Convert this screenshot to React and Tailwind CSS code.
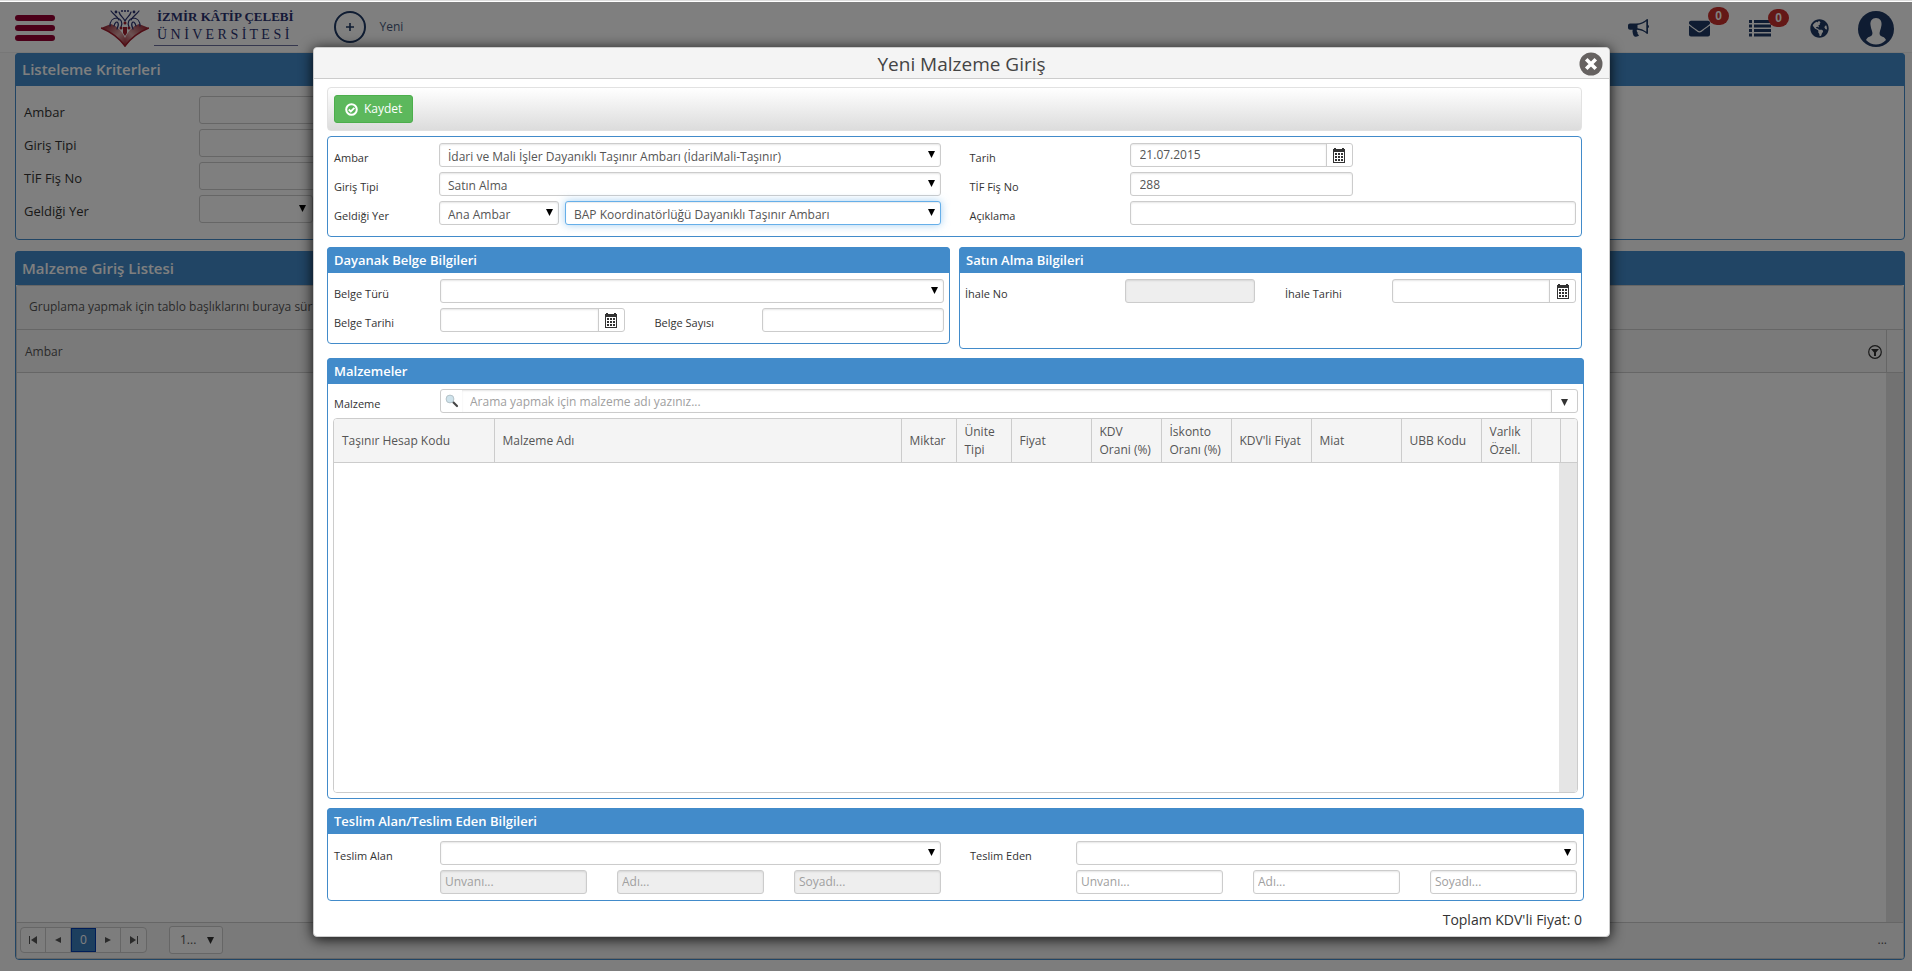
import React, { useState } from 'react';
import { FaEnvelope, FaGlobeAmericas } from 'react-icons/fa';

const materialColumns = [
  { label: 'Taşınır Hesap Kodu', width: 'w-[160px]' },
  { label: 'Malzeme Adı', width: '' },
  { label: 'Miktar', width: 'w-[55px]' },
  { label: 'Ünite\nTipi', width: 'w-[55px]' },
  { label: 'Fiyat', width: 'w-[80px]' },
  { label: 'KDV\nOrani (%)', width: 'w-[70px]' },
  { label: 'İskonto\nOranı (%)', width: 'w-[70px]' },
  { label: "KDV'li Fiyat", width: 'w-[80px]' },
  { label: 'Miat', width: 'w-[90px]' },
  { label: 'UBB Kodu', width: 'w-[80px]' },
  { label: 'Varlık\nÖzell.', width: 'w-[50px]' },
  { label: '', width: 'w-[29px]' },
  { label: '', width: 'w-[17px]' }
];

const fieldBase =
  'block w-full rounded-[3px] border bg-white text-[12px] text-[#555] outline-none placeholder:text-[#a0a0a0] disabled:bg-[#eee]';
const fieldIdle = 'border-[#ccc] shadow-[inset_0_1px_2px_rgba(0,0,0,0.1)]';
const fieldFocused =
  'border-[#66afe9] shadow-[inset_0_1px_1px_rgba(0,0,0,0.08),0_0_8px_rgba(102,175,233,0.6)]';

const CaretIcon = ({ className }) => (
  <svg viewBox="0 0 7 7" className={`h-[7px] w-[7px] ${className || ''}`} aria-hidden="true">
    <path d="M0 0h7L3.5 7z" fill="currentColor" />
  </svg>
);

const CalendarIcon = () => (
  <svg viewBox="0 0 12 15" className="h-[15px] w-[12px]" shapeRendering="crispEdges" aria-hidden="true">
    <path
      fill="#333"
      d="M0 1h1V0h2v1h6V0h2v1h1v14H0zM1 4v10h10V4zM2 5h2v2H2zM5 5h2v2H5zM8 5h2v2H8zM2 8h2v2H2zM5 8h2v2H5zM8 8h2v2H8zM2 11h2v2H2zM5 11h2v2H5zM8 11h2v2H8z"
      fillRule="evenodd"
    />
  </svg>
);

const Label = ({ htmlFor, children, className }) => (
  <label htmlFor={htmlFor} className={`shrink-0 pt-[6px] text-[11px] leading-[18px] text-[#333] ${className}`}>
    {children}
  </label>
);

const TextBox = ({ className, ...props }) => (
  <input type="text" className={`${fieldBase} ${fieldIdle} h-6 ${className || 'px-[9px]'}`} {...props} />
);

const SelectBox = ({ id, value, label, focused, className }) => (
  <div className={`relative ${className || 'w-full'}`}>
    <select
      id={id}
      aria-label={label}
      className={`${fieldBase} h-6 appearance-none pt-[3px] pr-5 pl-2 ${focused ? fieldFocused : fieldIdle}`}
    >
      <option>{value}</option>
    </select>
    <CaretIcon className="pointer-events-none absolute top-2 right-[6px] text-black" />
  </div>
);

const DateBox = ({ id, defaultValue, className }) => (
  <div className={`flex h-6 overflow-hidden rounded-[3px] border border-[#ccc] bg-white ${className}`}>
    <input
      id={id}
      type="text"
      defaultValue={defaultValue}
      className="min-w-0 flex-1 px-[9px] text-[12px] text-[#555] shadow-[inset_0_1px_2px_rgba(0,0,0,0.1)] outline-none"
    />
    <button type="button" aria-label="Takvim" className="flex w-[26px] items-center justify-center border-l border-[#ccc]">
      <CalendarIcon />
    </button>
  </div>
);

const Panel = ({ title, children, className }) => (
  <section className={`rounded-[4px] border border-[#428bca] bg-white ${className || ''}`}>
    <h3 className="-mx-px -mt-px rounded-t-[4px] bg-[#428bca] px-[7px] text-[13px] leading-[26px] font-semibold text-white">
      {title}
    </h3>
    {children}
  </section>
);

const Logo = () => (
  <a href="#" className="flex items-start gap-[5px] text-[#2a3270]">
    <svg viewBox="0 0 48 38" className="h-[38px] w-[48px]" aria-hidden="true">
      <defs>
        <linearGradient id="page" x1="0" y1="0" x2="1" y2="1">
          <stop offset="0" stopColor="#8c1020" />
          <stop offset="0.6" stopColor="#d9a4a4" />
          <stop offset="1" stopColor="#a02030" />
        </linearGradient>
        <linearGradient id="pageRight" x1="1" y1="0" x2="0" y2="1">
          <stop offset="0" stopColor="#8c1020" />
          <stop offset="0.6" stopColor="#d9a4a4" />
          <stop offset="1" stopColor="#a02030" />
        </linearGradient>
      </defs>
      <path d="M0 19l10-4c6 2 11 7 14 14v9C18 29 10 23 0 19z" fill="url(#page)" />
      <path d="M48 19l-10-4c-6 2-11 7-14 14v9c6-9 14-15 24-19z" fill="url(#pageRight)" />
      <path d="M0 19c10 4 18 10 24 18 6-8 14-14 24-18" fill="none" stroke="#a01c2c" strokeWidth="1.4" />
      <g fill="none" stroke="#2a3270" strokeWidth="1.2" strokeLinecap="round">
        <path d="M10 2c3 4 6 5 8 9M38 2c-3 4-6 5-8 9M18 3c1 4 4 5 6 9 2-4 5-5 6-9" />
        <path d="M9 17c0-5 3-8 7-8 4 1 6 4 4 9M39 17c0-5-3-8-7-8-4 1-6 4-4 9" />
        <path d="M13 17c1-4 3-5 4-3s0 4-1 6M35 17c-1-4-3-5-4-3s0 4 1 6" />
      </g>
      <g fill="#2a3270">
        <circle cx="15" cy="3" r="1.400" />
        <circle cx="33" cy="3" r="1.400" />
        <circle cx="21" cy="2" r="1" />
        <circle cx="24" cy="2" r="1" />
        <circle cx="27" cy="2" r="1" />
      </g>
      <g fill="#a01c2c">
        <circle cx="24" cy="14" r="1.500" />
        <circle cx="20" cy="19" r="1.500" />
        <circle cx="28" cy="19" r="1.500" />
        <path d="M22 18h4v6l-2 3-2-3z" />
      </g>
    </svg>
    <span className="border-b border-[#6b6f9c] pr-1 pl-[3px] font-['Liberation_Serif',serif]">
      <span className="block text-[13px] leading-4 font-bold whitespace-nowrap">İZMİR KÂTİP ÇELEBİ</span>
      <span className="block text-[14px] leading-5 whitespace-nowrap">Ü N İ V E R S İ T E S İ</span>
    </span>
  </a>
);

const BullhornIcon = () => (
  <svg viewBox="0 0 21 18" className="h-[18px] w-[21px]" aria-hidden="true">
    <path
      d="M19 0c.6 0 1 .4 1 1v5c1.300 .3 1.300 3 0 3v5c0 .6-.5 1-1 1-2.500-2.500-6-4-10-4.300-.7 1.300 0 2 .7 2.800-.5 1.200.3 2 1.300 2.800-1.100 1.900-4.500 1.900-5.500.2-.6-1.900-1.500-3.700-.7-5.800H2c-1.100 0-2-.9-2-2V6.500C0 5.400.9 4.500 2 4.500h6C12.500 4.500 16.500 2.500 19 0zm-.7 2.300C15.500 4.600 12.500 5.700 9.500 6v3.200c3 .3 6 1.400 8.800 3.600z"
      fill="currentColor"
      fillRule="evenodd"
    />
  </svg>
);

const ListIcon = () => (
  <svg viewBox="0 0 22 17" className="h-[17px] w-[22px]" aria-hidden="true">
    <path
      d="M0 0h3v3H0zM5 0h17v3H5zM0 4.500h3v3H0zM5 4.500h17v3H5zM0 9h3v3H0zM5 9h17v3H5zM0 13.500h3v3H0zM5 13.500h17v3H5z"
      fill="currentColor"
    />
  </svg>
);

const Badge = ({ children }) => (
  <span className="absolute -top-[11px] left-[19px] flex h-[18px] w-[21px] items-center justify-center rounded-full bg-[#c9302c] font-['Liberation_Sans',sans-serif] text-[12px] font-bold text-white">
    {children}
  </span>
);

const TopBar = () => (
  <header className="flex h-[52px] items-start justify-between border-b border-[#eee] bg-white pt-2 pr-[18px] pl-[15px] text-[#1e3864]">
    <div className="flex items-start">
      <button type="button" aria-label="Menü" className="mt-[6px] mr-[46px] flex w-10 flex-col gap-1">
        <span className="h-[6px] rounded-[3px] bg-[#960032]" />
        <span className="h-[6px] rounded-[3px] bg-[#960032]" />
        <span className="h-[6px] rounded-[3px] bg-[#960032]" />
      </button>
      <Logo />
      <button type="button" className="mt-[2px] ml-9 flex items-center gap-[14px] text-[12px] text-[#46587c]">
        <span className="flex h-8 w-8 items-center justify-center rounded-full border-2 border-[#1e3864]">
          <svg viewBox="0 0 8 8" className="h-2 w-2" aria-hidden="true">
            <path d="M4 0v8M0 4h8" stroke="#1e3864" strokeWidth="1.6" />
          </svg>
        </span>
        Yeni
      </button>
    </div>
    <div className="flex items-center">
      <button type="button" aria-label="Duyurular" className="mr-[40px]">
        <BullhornIcon />
      </button>
      <button type="button" aria-label="Mesajlar" className="relative mr-[39px]">
        <FaEnvelope size={21} />
        <Badge>0</Badge>
      </button>
      <button type="button" aria-label="Görevler" className="relative mr-[39px]">
        <ListIcon />
        <Badge>0</Badge>
      </button>
      <button type="button" aria-label="Dil" className="mr-[29px]">
        <FaGlobeAmericas size={19} />
      </button>
      <button type="button" aria-label="Profil" className="pt-[2px]">
        <svg viewBox="0 0 36 36" className="h-9 w-9" aria-hidden="true">
          <circle cx="18" cy="18" r="18" fill="#1e3864" />
          <path
            d="M18 7c-4 0-6 3-5.500 7 .2 2 .8 4 1.500 6 .8 2.500.5 4-1 5-2 1-4 1.300-5 4 3 3 6.500 4.500 10 4.500s7-1.500 10-4.500c-1-2.700-3-3-5-4-1.500-1-1.800-2.500-1-5 .7-2 1.300-4 1.500-6 .5-4-1.500-7-5.500-7z"
            fill="#fff"
          />
        </svg>
      </button>
    </div>
  </header>
);

const criteria = [
  { id: 'f-ambar', label: 'Ambar' },
  { id: 'f-giris', label: 'Giriş Tipi' },
  { id: 'f-tif', label: 'TİF Fiş No' }
];

const pageButton = 'flex h-6 w-[25px] items-center justify-center border-r border-[#ccc]';

const ListPage = () => (
  <div className="flex min-h-[calc(100vh-1px)] flex-col bg-[#fafafa] pb-[11px]">
    <TopBar />
    <main className="mr-[7px] ml-[15px] flex flex-1 flex-col gap-[11px]">
      <section className="rounded-[4px] border border-[#428bca] bg-white">
        <h2 className="-mx-px -mt-px rounded-t-[4px] bg-[#428bca] px-[7px] text-[15px] leading-[33px] font-semibold text-white">
          Listeleme Kriterleri
        </h2>
        <div className="flex flex-col gap-[5px] px-2 pt-[10px] pb-4 text-[13px] text-[#333]">
          {criteria.map((item) => (
            <div key={item.id} className="flex items-center">
              <label htmlFor={item.id} className="w-[175px] pt-[6px]">
                {item.label}
              </label>
              <input id={item.id} type="text" className="h-7 w-[300px] rounded-[3px] border border-[#ccc]" />
            </div>
          ))}
          <div className="flex items-center">
            <label htmlFor="f-yer" className="w-[175px] pt-[6px]">
              Geldiği Yer
            </label>
            <div className="relative w-[114px]">
              <select id="f-yer" className="block h-7 w-full appearance-none rounded-[3px] border border-[#ccc]">
                <option></option>
              </select>
              <CaretIcon className="pointer-events-none absolute top-[10px] right-[7px] text-black" />
            </div>
          </div>
        </div>
      </section>

      <section className="flex flex-1 flex-col rounded-[4px] border border-[#428bca] bg-white">
        <h2 className="-mx-px -mt-px rounded-t-[4px] bg-[#428bca] px-[7px] text-[15px] leading-[34px] font-semibold text-white">
          Malzeme Giriş Listesi
        </h2>
        <div className="flex flex-1 flex-col rounded-[3px] border border-[#ccc]">
          <p className="bg-[#f5f5f5] px-3 pb-[2px] text-[12px] leading-[41px] text-[#555]">
            Gruplama yapmak için tablo başlıklarını buraya sür
          </p>
          <table className="w-full table-fixed border-y border-[#ccc] bg-[#f5f5f5]">
            <thead>
              <tr className="h-[43px] text-left text-[12px] text-[#555]">
                <th className="w-[400px] px-2 pt-px font-normal">Ambar</th>
                <th className="px-1 pt-[2px] font-normal">
                  <button type="button" aria-label="Filtre" className="ml-auto block">
                    <svg viewBox="0 0 14 14" className="h-[14px] w-[14px]" aria-hidden="true">
                      <circle cx="7" cy="7" r="6.300" fill="none" stroke="#333" strokeWidth="1.200" />
                      <path d="M3 4h8L8 7.500V11H6V7.500z" fill="#333" />
                    </svg>
                  </button>
                </th>
                <th className="w-[17px] border-l border-[#ccc]" />
              </tr>
            </thead>
          </table>
          <div className="flex flex-1 justify-end">
            <div className="w-[17px] bg-[#e5e5e5]" />
          </div>
          <footer className="flex h-9 items-center justify-between border-t border-[#ccc] bg-[#f5f5f5] pr-4 pb-[2px] pl-[3px] text-[12px] text-[#555]">
            <div className="flex items-center gap-[22px]">
              <nav aria-label="Sayfalar" className="flex overflow-hidden rounded-[4px] border border-[#ccc] bg-[#fafafa]">
                <button type="button" aria-label="İlk" className={pageButton}>
                  <svg viewBox="0 0 8 8" className="h-2 w-2"><path d="M0 0h1v8H0zM8 0v8L2 4z" fill="#555" /></svg>
                </button>
                <button type="button" aria-label="Önceki" className={pageButton}>
                  <svg viewBox="0 0 8 8" className="h-2 w-2"><path d="M7 1v6L1 4z" fill="#555" /></svg>
                </button>
                <button type="button" className="h-6 w-[25px] border border-[#003bb0] bg-[#3a7fbd] text-white">
                  0
                </button>
                <button type="button" aria-label="Sonraki" className={pageButton}>
                  <svg viewBox="0 0 8 8" className="h-2 w-2"><path d="M1 1v6l6-3z" fill="#555" /></svg>
                </button>
                <button type="button" aria-label="Son" className="flex h-6 w-[25px] items-center justify-center">
                  <svg viewBox="0 0 8 8" className="h-2 w-2"><path d="M7 0h1v8H7zM0 0v8l6-4z" fill="#555" /></svg>
                </button>
              </nav>
              <div className="relative w-[54px]">
                <select
                  aria-label="Sayfa boyutu"
                  className="block h-7 w-full appearance-none rounded-[3px] border border-[#ccc] bg-white pl-[10px]"
                >
                  <option>1...</option>
                </select>
                <CaretIcon className="pointer-events-none absolute top-[11px] right-[9px] text-[#333]" />
              </div>
            </div>
            <span>...</span>
          </footer>
        </div>
      </section>
    </main>
  </div>
);

const personPlaceholders = ['Unvanı...', 'Adı...', 'Soyadı...'];

const PersonFields = ({ id, label, disabled }) => (
  <div className="flex items-start">
    <Label htmlFor={id} className="w-[106px]">
      {label}
    </Label>
    <div className="flex flex-1 flex-col gap-[5px]">
      <SelectBox id={id} value="" />
      <div className="grid grid-cols-3 gap-x-[30px]">
        {personPlaceholders.map((text) => (
          <TextBox key={text} aria-label={text} placeholder={text} disabled={disabled} className="px-1" />
        ))}
      </div>
    </div>
  </div>
);

const NewEntryDialog = ({ onClose }) => (
  <div className="absolute inset-x-0 top-px min-h-[calc(100%-1px)] bg-black/50 pt-[45px] pl-[11px]">
    <div
      role="dialog"
      aria-labelledby="dialog-title"
      className="mx-auto w-full max-w-[1297px] rounded-[4px] border border-[#ccc] bg-white shadow-[0_2px_14px_rgba(0,0,0,0.9)]"
    >
      <div className="relative rounded-t-[4px] border-b border-[#ccc] bg-[#f4f4f4]">
        <h2 id="dialog-title" className="pt-[2px] text-center text-[19px] leading-7 text-[#444]">
          Yeni Malzeme Giriş
        </h2>
        <button type="button" aria-label="Kapat" onClick={onClose} className="absolute top-1 right-[6px]">
          <svg viewBox="0 0 24 24" className="h-6 w-6" aria-hidden="true">
            <circle cx="12" cy="12" r="11.500" fill="#666261" />
            <path d="M8.500 8.500l7 7M15.500 8.500l-7 7" stroke="#fff" strokeWidth="3.600" strokeLinecap="square" />
          </svg>
        </button>
      </div>

      <form className="flex flex-col gap-[9px] pt-2 pr-[25px] pl-[13px]">
        <div className="mr-[2px] flex flex-col gap-[5px]">
          <div className="flex h-11 items-center rounded-[4px] border border-[#e2e2e2] bg-linear-to-b from-white to-[#dcdcdc] px-[6px]">
            <button
              type="button"
              className="flex h-7 items-center gap-[6px] rounded-[3px] border border-[#4cae4c] bg-[#5cb85c] px-[10px] text-[12px] text-white"
            >
              <svg viewBox="0 0 13 13" className="h-[13px] w-[13px]" aria-hidden="true">
                <circle cx="6.500" cy="6.500" r="5.300" fill="none" stroke="#fff" strokeWidth="2" />
                <path d="M3.800 6.500l2 2 3.600-3.700" fill="none" stroke="#fff" strokeWidth="1.800" />
              </svg>
              Kaydet
            </button>
          </div>

          <div className="grid grid-cols-2 gap-x-[29px] gap-y-[5px] rounded-[4px] border border-[#428bca] pt-[6px] pr-[5px] pb-[11px] pl-[6px]">
            <div className="flex">
              <Label htmlFor="ambar" className="w-[105px]">Ambar</Label>
              <SelectBox id="ambar" value="İdari ve Mali İşler Dayanıklı Taşınır Ambarı (İdariMali-Taşınır)" />
            </div>
            <div className="flex">
              <Label htmlFor="tarih" className="w-[160px]">Tarih</Label>
              <DateBox id="tarih" defaultValue="21.07.2015" className="w-1/2 max-w-[223px]" />
            </div>
            <div className="flex">
              <Label htmlFor="giris" className="w-[105px]">Giriş Tipi</Label>
              <SelectBox id="giris" value="Satın Alma" />
            </div>
            <div className="flex">
              <Label htmlFor="tif" className="w-[160px]">TİF Fiş No</Label>
              <div className="w-1/2 max-w-[223px]">
                <TextBox id="tif" defaultValue="288" />
              </div>
            </div>
            <div className="flex">
              <Label htmlFor="yer" className="w-[105px]">Geldiği Yer</Label>
              <SelectBox id="yer" value="Ana Ambar" className="mr-[6px] w-[120px] shrink-0" />
              <SelectBox label="Geldiği ambar" value="BAP Koordinatörlüğü Dayanıklı Taşınır Ambarı" focused />
            </div>
            <div className="flex">
              <Label htmlFor="aciklama" className="w-[160px]">Açıklama</Label>
              <TextBox id="aciklama" />
            </div>
          </div>

          <div className="mt-[5px] grid grid-cols-2 items-start gap-[9px]">
            <Panel title="Dayanak Belge Bilgileri">
              <div className="flex flex-col gap-[5px] pt-[6px] pr-[5px] pb-[11px] pl-[6px]">
                <div className="flex">
                  <Label htmlFor="belge-turu" className="w-[106px]">Belge Türü</Label>
                  <SelectBox id="belge-turu" value="" />
                </div>
                <div className="flex">
                  <Label htmlFor="belge-tarihi" className="w-[106px]">Belge Tarihi</Label>
                  <DateBox id="belge-tarihi" className="mr-[30px] min-w-0 flex-1" />
                  <Label htmlFor="belge-sayisi" className="w-[107px]">Belge Sayısı</Label>
                  <div className="min-w-0 flex-1">
                    <TextBox id="belge-sayisi" />
                  </div>
                </div>
              </div>
            </Panel>
            <Panel title="Satın Alma Bilgileri">
              <div className="flex h-[75px] items-start pt-[6px] pr-[5px] pl-[5px]">
                <Label htmlFor="ihale-no" className="w-[160px]">İhale No</Label>
                <div className="mr-[30px] w-[130px]">
                  <TextBox id="ihale-no" disabled />
                </div>
                <Label htmlFor="ihale-tarihi" className="w-[107px]">İhale Tarihi</Label>
                <DateBox id="ihale-tarihi" className="min-w-0 flex-1" />
              </div>
            </Panel>
          </div>
        </div>

        <Panel title="Malzemeler">
          <div className="flex flex-col gap-[5px] p-[5px]">
            <div className="flex pl-px">
              <Label htmlFor="malzeme" className="w-[106px]">Malzeme</Label>
              <div className="flex h-6 flex-1 overflow-hidden rounded-[3px] border border-[#ccc] bg-white">
                <span className="flex w-[21px] items-center justify-center">
                  <svg viewBox="0 0 14 14" className="h-[14px] w-[14px]" aria-hidden="true">
                    <path d="M8 8l4 4" stroke="#444" strokeWidth="2.200" strokeLinecap="round" />
                    <circle cx="5" cy="5" r="3.900" fill="#cfe3ec" stroke="#b4c2c8" />
                  </svg>
                </span>
                <input
                  id="malzeme"
                  type="text"
                  placeholder="Arama yapmak için malzeme adı yazınız..."
                  className="min-w-0 flex-1 px-2 pt-[2px] text-[12px] text-[#555] shadow-[inset_0_1px_2px_rgba(0,0,0,0.1)] outline-none placeholder:text-[#a0a0a0]"
                />
                <button
                  type="button"
                  aria-label="Listeyi aç"
                  className="flex w-[26px] items-center justify-center border-l border-[#ccc] pt-[3px] text-[#333]"
                >
                  <CaretIcon />
                </button>
              </div>
            </div>

            <div className="overflow-hidden rounded-[4px] border border-[#ccc]">
              <table className="w-full table-fixed border-collapse bg-[#f4f4f4]">
                <thead>
                  <tr className="h-[43px] border-b border-[#ccc] text-left text-[12px] leading-[18px] text-[#555]">
                    {materialColumns.map((col, i) => (
                      <th
                        key={i}
                        className={`border-r border-[#ccc] pt-[2px] pl-2 font-normal whitespace-pre last:border-r-0 ${col.width}`}
                      >
                        {col.label}
                      </th>
                    ))}
                  </tr>
                </thead>
              </table>
              <div className="flex h-[329px] justify-end bg-white">
                <div className="w-[18px] bg-[#e5e5e5]" />
              </div>
            </div>
          </div>
        </Panel>

        <Panel title="Teslim Alan/Teslim Eden Bilgileri">
          <div className="grid grid-cols-2 gap-x-[29px] px-[6px] pt-[7px] pb-[6px]">
            <PersonFields id="teslim-alan" label="Teslim Alan" disabled />
            <PersonFields id="teslim-eden" label="Teslim Eden" />
          </div>
        </Panel>

        <p className="mr-[2px] pb-[6px] text-right text-[14px] leading-5 text-[#333]">
          Toplam KDV'li Fiyat: 0
        </p>
      </form>
    </div>
  </div>
);

const App = () => {
  const [dialogOpen, setDialogOpen] = useState(true);

  return (
    <div className="relative border-t border-[#ddd] font-['Open_Sans',sans-serif]">
      <ListPage />
      {dialogOpen && <NewEntryDialog onClose={() => setDialogOpen(false)} />}
    </div>
  );
};

export default App;
